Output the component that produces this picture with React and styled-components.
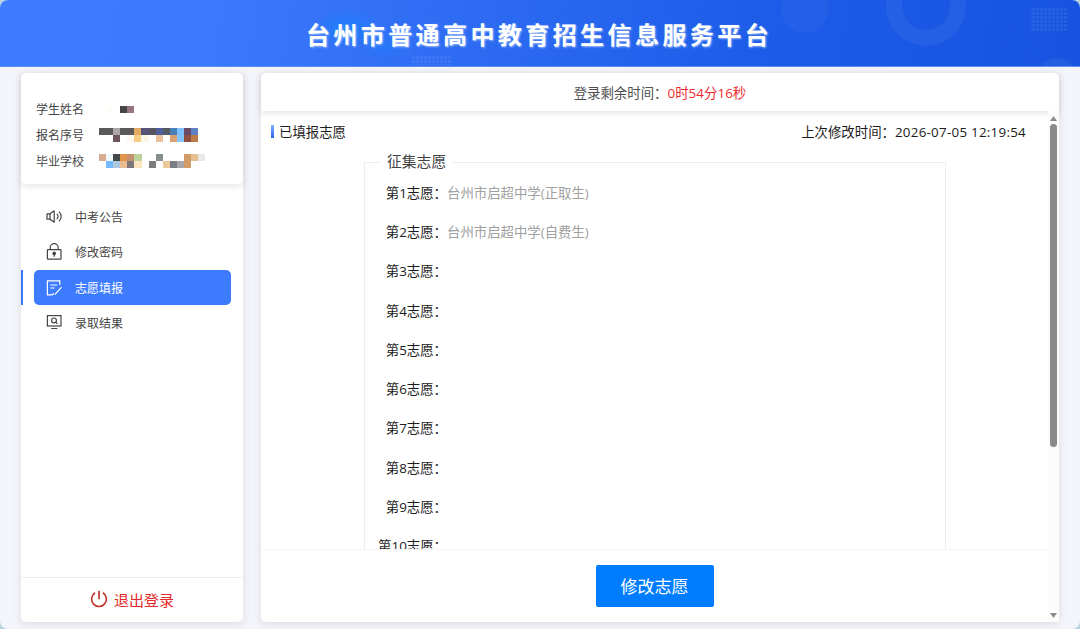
import React from 'react';
import { useState } from 'react';
import styled, { createGlobalStyle } from 'styled-components';

const GlobalStyle = createGlobalStyle`
* { box-sizing: border-box; }
body {
  margin: 0;
  overflow: hidden;
  background: #b9d3da;
  font-family: "Open Sans", "Noto Sans CJK SC", sans-serif;
  color: #222;
}
`;

const Page = styled.div`
height: 100vh;
display: flex;
flex-direction: column;
background: #f4f5fa;
border-radius: 8px;
overflow: hidden;
`;

const Header = styled.header`
position: relative;
flex: 0 0 67px;
display: flex;
align-items: center;
justify-content: center;
padding-top: 3px;
padding-right: 2px;
border-bottom: 1px solid #5a8cf2;
background: linear-gradient(100deg, #3e7bff 0%, #3b78fc 20%, #2c6af2 45%, #1d5ce8 70%, #1553e0 100%);
`;

const Decor = styled.svg`
position: absolute;
top: 0;
left: 0;
`;

const Title = styled.h1`
position: relative;
margin: 0;
font-size: 24px;
line-height: 32px;
font-weight: 700;
letter-spacing: 3.42px;
color: #fff;
text-shadow: 1px 1px 2px rgba(200, 220, 255, 0.7);
`;

const Body = styled.div`
flex: 1;
min-height: 0;
display: flex;
gap: 18px;
padding: 6px 21px 7px;
`;

const Panel = styled.div`
display: flex;
flex-direction: column;
background: #fff;
border-radius: 5px;
box-shadow: 0 2px 8px rgba(0, 0, 0, 0.1);
`;

const Sidebar = styled(Panel)`
flex: 0 0 222px;
`;

const Student = styled.div`
flex: 0 0 111px;
padding: 23px 15px 0;
border-radius: 5px;
box-shadow: 0 2px 7px rgba(0, 0, 0, 0.11);
`;

const StudentRow = styled.div`
display: flex;
align-items: center;
height: 26px;
font-size: 12px;
color: #444;
`;

const StudentLabel = styled.span`
width: 62.5px;
`;

const Menu = styled.nav`
flex: 1;
padding-top: 14.5px;
`;

const MenuItem = styled.div`
display: flex;
height: 35.5px;
padding-right: 12px;
padding-left: 11px;
border-left: 2px solid ${(props) => props.$active ? "#3b78fe" : "transparent"};
cursor: pointer;
`;

const MenuLink = styled.div`
flex: 1;
display: flex;
align-items: center;
gap: 12px;
padding-top: 1px;
padding-left: 11px;
border-radius: 5px;
font-size: 12px;
color: ${(props) => props.$active ? "#fff" : "#444"};
background: ${(props) => props.$active ? "#3d7bff" : "transparent"};
`;

const Logout = styled.div`
flex: 0 0 45px;
display: flex;
align-items: center;
justify-content: center;
gap: 6px;
padding-bottom: 2px;
border-top: 1px solid #ededf0;
font-size: 15px;
color: #e42a2a;
`;

const Main = styled(Panel)`
flex: 1;
min-width: 0;
`;

const Timer = styled.div`
flex: 0 0 38px;
display: flex;
align-items: center;
justify-content: center;
padding-bottom: 1px;
border-radius: 5px 5px 0 0;
box-shadow: 0 2px 7px rgba(0, 0, 0, 0.11);
font-size: 13.4px;
color: #505050;
`;

const TimeLeft = styled.span`
color: #ee2a2e;
letter-spacing: 0.05px;
`;

const Content = styled.div`
flex: 1;
min-height: 0;
display: flex;
`;

const Column = styled.div`
flex: 1;
min-width: 0;
display: flex;
flex-direction: column;
`;

const Scroller = styled.div`
flex: 1;
min-height: 0;
overflow: hidden;
`;

const Summary = styled.div`
display: flex;
align-items: center;
justify-content: space-between;
height: 42px;
padding: 0 22px 2px 10px;
font-size: 13.4px;
color: #1c1c1c;
`;

const SummaryTitle = styled.div`
display: flex;
align-items: center;
gap: 5px;

&::before {
  content: "";
  width: 3px;
  height: 13px;
  background: linear-gradient(#7fb0ff, #2a63e8);
}
`;

const Stamp = styled.span`
letter-spacing: 0.25px;
`;

const Group = styled.fieldset`
width: 582px;
height: 700px;
margin: 0 0 0 103px;
padding: 1px 0 0;
border: 1px solid #ededed;
`;

const Legend = styled.legend`
margin-left: 15px;
padding: 0 7px 2px;
font-size: 14.8px;
line-height: 16px;
color: #444;
`;

const Wish = styled.div`
display: flex;
align-items: center;
height: 39.3px;
font-size: 13.4px;
`;

const WishLabel = styled.span`
width: 82px;
text-align: right;
color: #1c1c1c;
`;

const WishValue = styled.span`
color: #a0a0a0;
`;

const Footer = styled.div`
flex: 0 0 73px;
display: flex;
justify-content: center;
padding-top: 15px;
border-top: 1px solid #f5f5f5;
`;

const Button = styled.button`
width: 118px;
height: 42px;
padding: 0 0 1px;
border: none;
border-radius: 2px;
background: #007dff;
font-family: inherit;
font-size: 17px;
color: #fff;
cursor: pointer;
`;

const ScrollBar = styled.div`
flex: 0 0 11px;
display: flex;
flex-direction: column;
align-items: center;
padding: 5px 0 4px;
background: #fcfcfc;
`;

const Thumb = styled.div`
width: 7px;
height: 323px;
margin: 3px 0 auto;
border-radius: 4px;
background: #8b8b8b;
`;

// colours of the masked cells, one list for each line of cells
const masks = {
  name: [
    [null, "#fefcf7", null, "#444746", "#98757e"],
  ],
  number: [
    ["#5a5859", "#5a5859", "#a9a5a9", "#5a5859", "#5a5859", "#e3ab62", "#57547a", "#565560", "#4d5f9c", "#555966", "#4a80b8", "#7fc1ff", "#6a4c68", "#5f80c4"],
    [null, null, "#6d5560", null, "#fdf9ee", "#f4cc85", "#fdf6e6", null, "#e9bf9c", null, "#d9a270", "#84c5ff", "#8e4f43", "#bd7b47"],
  ],
  school: [
    ["#d8ac91", "#f0f8fb", "#444a4c", "#e09649", "#c6926d", "#bcd49b", null, null, "#858e8d", null, null, null, "#d29c69", "#e3bf93", "#e8e8e6"],
    [null, "#74baff", "#abc8df", "#ebbc8f", "#7d7879", "#fbe5be", null, "#7b7e7d", null, "#edc89b", "#7b7d84", "#a8a7aa", "#d29c69"],
  ],
};

const Mask = ({ rows }) => (
  <svg width="107" height={rows.length * 7} shapeRendering="crispEdges">
    {rows.map((row, y) =>
      row.map((color, x) => color && (
        <rect key={`${x}-${y}`} x={x * 7.08} y={y * 7} width="7.1" height="7" fill={color} />
      ))
    )}
  </svg>
);

const SpeakerIcon = () => (
  <svg width="18" height="18" viewBox="0 0 18 18" fill="none" stroke="currentColor" strokeWidth="1.2">
    <path d="M2 5.8h3l4.2-3v11.4L5 11.2H2z" strokeLinejoin="round" />
    <path d="M5 5.8v5.4M11.8 5.8c1.6 1.6 1.6 3.8 0 5.4M13.9 3.6c3 2.8 3 7 0 9.8" />
  </svg>
);

const LockIcon = () => (
  <svg width="18" height="18" viewBox="0 0 18 18" fill="none" stroke="currentColor" strokeWidth="1.2">
    <rect x="2.4" y="6.7" width="13.6" height="9.4" rx="0.6" />
    <path d="M5.3 6.5V4.1a3.9 3.4 0 0 1 7.8 0v2.4" />
    <circle cx="9.2" cy="10.4" r="1.2" fill="currentColor" />
    <path d="M9.2 10.5v3.2" />
  </svg>
);

const FormIcon = () => (
  <svg width="18" height="18" viewBox="0 0 18 18" fill="none" stroke="currentColor" strokeWidth="1.2">
    <path d="M14.8 6V1.8H2.4v14h4.7c1.6 0 1.4-1.8 1.4-1.8M5.4 6h6.8M5.4 9h4.2" />
    <path d="M9.8 15.6l6.7-7.4" />
  </svg>
);

const ResultIcon = () => (
  <svg width="18" height="18" viewBox="0 0 18 18" fill="none" stroke="currentColor" strokeWidth="1.2">
    <rect x="2.4" y="1.6" width="13.6" height="10.4" />
    <circle cx="9" cy="6.4" r="2.4" />
    <path d="M10.8 8.2l1.6 1.6M6.2 14.5h6.2" />
  </svg>
);

const PowerIcon = () => (
  <svg width="18" height="18" viewBox="0 0 18 18" fill="none" stroke="#c0392b" strokeWidth="1.7">
    <path d="M5.1 2.8a7.4 7.4 0 1 0 7.8 0M9 0.8v8.4" />
  </svg>
);

const HeaderDecor = () => (
  <Decor width="1080" height="67" viewBox="0 0 1080 67">
    <defs>
      <pattern id="dots" width="4" height="4" patternUnits="userSpaceOnUse">
        <rect width="3" height="3" fill="#fff" fillOpacity="0.07" />
      </pattern>
      <radialGradient id="glow">
        <stop offset="0" stopColor="#078bff" stopOpacity="0.5" />
        <stop offset="1" stopColor="#078bff" stopOpacity="0" />
      </radialGradient>
    </defs>
    <ellipse cx="347" cy="28" rx="34" ry="19" fill="url(#glow)" />
    <ellipse cx="385" cy="46" rx="28" ry="14" fill="url(#glow)" opacity="0.6" />
    <circle cx="805" cy="9" r="24" fill="#fff" fillOpacity="0.03" />
    <circle cx="926" cy="6" r="32" fill="none" stroke="#fff" strokeOpacity="0.05" strokeWidth="16" />
    <circle cx="1057" cy="79" r="21" fill="#fff" fillOpacity="0.06" />
    <rect x="1030" y="8" width="38" height="24" fill="url(#dots)" />
    <rect x="412" y="56" width="39" height="9" fill="url(#dots)" />
  </Decor>
);

const student = [
  { label: "学生姓名", mask: masks.name },
  { label: "报名序号", mask: masks.number },
  { label: "毕业学校", mask: masks.school },
];

const menu = [
  { id: 1, text: "中考公告", Icon: SpeakerIcon },
  { id: 2, text: "修改密码", Icon: LockIcon },
  { id: 3, text: "志愿填报", Icon: FormIcon },
  { id: 4, text: "录取结果", Icon: ResultIcon },
];

const wishes = ["台州市启超中学(正取生)", "台州市启超中学(自费生)", "", "", "", "", "", "", "", ""];

const App = () => {
  const [active, setActive] = useState(3);

  return (
    <>
      <GlobalStyle />
      <Page>
        <Header>
          <HeaderDecor />
          <Title>台州市普通高中教育招生信息服务平台</Title>
        </Header>
        <Body>
          <Sidebar>
            <Student>
              {student.map((item) => (
                <StudentRow key={item.label}>
                  <StudentLabel>{item.label}</StudentLabel>
                  <Mask rows={item.mask} />
                </StudentRow>
              ))}
            </Student>
            <Menu>
              {menu.map(({ id, text, Icon }) => (
                <MenuItem key={id} $active={id === active} onClick={() => setActive(id)}>
                  <MenuLink $active={id === active}>
                    <Icon />
                    {text}
                  </MenuLink>
                </MenuItem>
              ))}
            </Menu>
            <Logout>
              <PowerIcon />
              退出登录
            </Logout>
          </Sidebar>
          <Main>
            <Timer>
              登录剩余时间：<TimeLeft>0时54分16秒</TimeLeft>
            </Timer>
            <Content>
              <Column>
                <Scroller>
                  <Summary>
                    <SummaryTitle>已填报志愿</SummaryTitle>
                    <div>上次修改时间：<Stamp>2026-07-05 12:19:54</Stamp></div>
                  </Summary>
                  <Group>
                    <Legend>征集志愿</Legend>
                    {wishes.map((wish, i) => (
                      <Wish key={i}>
                        <WishLabel>第{i + 1}志愿：</WishLabel>
                        <WishValue>{wish}</WishValue>
                      </Wish>
                    ))}
                  </Group>
                </Scroller>
                <Footer>
                  <Button>修改志愿</Button>
                </Footer>
              </Column>
              <ScrollBar>
                <svg width="7" height="5"><path d="M0 5L3.5 0L7 5z" fill="#8b8b8b" /></svg>
                <Thumb />
                <svg width="7" height="5"><path d="M0 0L3.5 5L7 0z" fill="#8b8b8b" /></svg>
              </ScrollBar>
            </Content>
          </Main>
        </Body>
      </Page>
    </>
  );
};

export default App;
